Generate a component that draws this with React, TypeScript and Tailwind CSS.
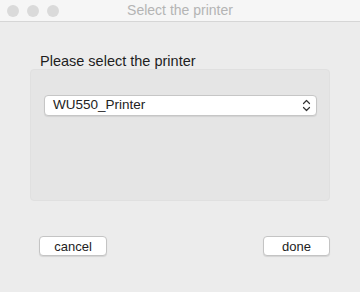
import React from 'react';

const font = { fontFamily: '"Liberation Sans", Arial, sans-serif' };

const UpDownIcon = () => (
  <svg width="9" height="13" viewBox="0 0 9 13" fill="none">
    <path d="M1.5 4.5 L4.5 1.5 L7.5 4.5" stroke="#333" strokeWidth="1.2" strokeLinecap="round" strokeLinejoin="round" />
    <path d="M1.5 8.5 L4.5 11.5 L7.5 8.5" stroke="#333" strokeWidth="1.2" strokeLinecap="round" strokeLinejoin="round" />
  </svg>
);

const App: React.FC = () => {
  return (
    <div className="w-[360px] h-[292px] bg-[#ececec] flex flex-col" style={font}>
      {/* barra de título */}
      <div className="relative h-[22px] bg-[#f6f6f6] border-b border-[#d6d6d6] flex items-center">
        <div className="flex gap-[8px] pl-[7px] pt-[1px]">
          <span className="w-[12px] h-[12px] rounded-full bg-[#dadada]" />
          <span className="w-[12px] h-[12px] rounded-full bg-[#dadada]" />
          <span className="w-[12px] h-[12px] rounded-full bg-[#dadada]" />
        </div>
        <div className="absolute inset-0 flex items-center justify-center text-[14px] text-[#b4b4b4]">
          Select the printer
        </div>
      </div>

      {/* contenido */}
      <div className="px-[30px] pt-[31px] flex flex-col">
        <div className="pl-[10px] text-[14.5px] leading-[16px] text-[#1e1e1e]">Please select the printer</div>
        <div className="h-[132px] bg-[#e5e5e5] border border-[#e0e0e0] rounded-[4px] pt-[25px] pl-[13px] pr-[12px]">
          <div className="h-[21px] bg-white border border-[#c6c6c6] rounded-[4px] shadow-[0_1px_1px_rgba(0,0,0,0.08)] flex items-center justify-between pl-[8px] pr-[5px]">
            <span className="text-[13.5px] text-[#222]">WU550_Printer</span>
            <UpDownIcon />
          </div>
        </div>

        <div className="flex justify-between pt-[35px] pl-[9px]">
          <button className="w-[68px] h-[20px] bg-white border border-[#c4c4c4] rounded-[4px] shadow-[0_1px_1px_rgba(0,0,0,0.1)] text-[13px] leading-none text-[#222]">
            cancel
          </button>
          <button className="w-[67px] h-[20px] bg-white border border-[#c4c4c4] rounded-[4px] shadow-[0_1px_1px_rgba(0,0,0,0.1)] text-[13px] leading-none text-[#222]">
            done
          </button>
        </div>
      </div>
    </div>
  );
};

export default App;
